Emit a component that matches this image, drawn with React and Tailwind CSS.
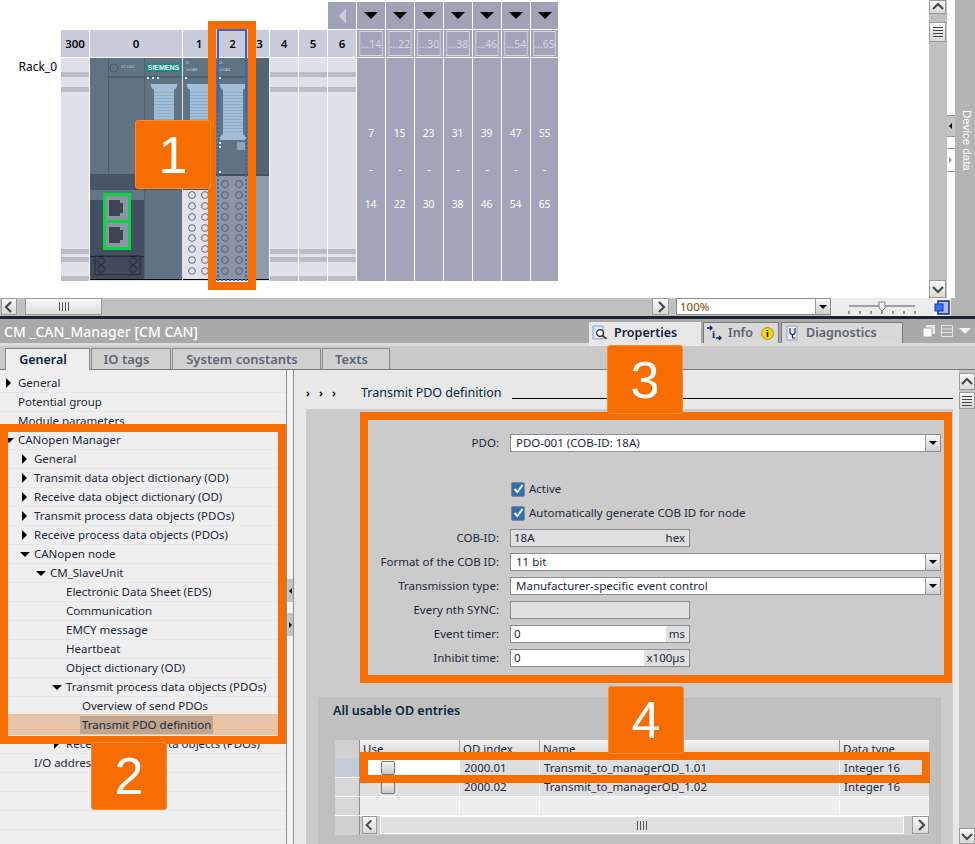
import React from "react";

const FONT = { fontFamily: '"Noto Sans", "Open Sans", sans-serif' };

function Stripes() {
  return (
    <div className="flex flex-col h-full bg-[#dfe0ea]">
      <div className="h-[14px] shrink-0" />
      <div className="h-[5px] shrink-0 bg-[#bcbcc9]" />
      <div className="h-[10px] shrink-0" />
      <div className="h-[5px] shrink-0 bg-[#bcbcc9]" />
      <div className="h-[157px] shrink-0" />
      <div className="h-[5px] shrink-0 bg-[#bcbcc9]" />
      <div className="h-[3px] shrink-0" />
      <div className="h-[5px] shrink-0 bg-[#bcbcc9]" />
      <div className="h-[14px] shrink-0" />
      <div className="h-[5px] shrink-0 bg-[#bcbcc9]" />
    </div>
  );
}

function Connector({ x }) {
  const lines = [];
  for (let y = 34; y < 76; y += 3) lines.push(<rect key={y} x={x + 3} y={y} width={20} height={1} fill="#8dadc9" />);
  return (
    <g>
      <path d={`M${x} 26h26v3l-3 3v44l3 3v3h-26v-3l3-3v-44l-3-3z`} fill="#a3bfd8" />
      {lines}
    </g>
  );
}

function Circles({ xs, ys, stroke }) {
  return ys.flatMap((y) =>
    xs.map((x) => <circle key={`${x}-${y}`} cx={x} cy={y} r="3.4" fill="none" stroke={stroke} strokeWidth="0.9" />)
  );
}

function Port({ y }) {
  return (
    <g>
      <rect x="16" y={y} width="22" height="24" fill="#8d94a4" />
      <path d={`M19 ${y + 4}h11v3h3v10h-3v3h-11z`} fill="#3f4452" />
    </g>
  );
}

function Modules() {
  const rowsA = [137, 148, 159, 170, 180, 191, 202, 213];
  const rowsB = [126, 137, 148, 159, 170, 180, 191, 202, 213];
  return (
    <svg width="179" height="223" viewBox="0 0 179 223" className="block">
      <rect width="179" height="223" fill="#dfe0ea" />
      <rect x="0" y="0" width="92" height="221" fill="#5f7383" />
      <rect x="18" y="0" width="1" height="116" fill="#4f6171" />
      <rect x="54" y="0" width="1" height="221" fill="#4f6171" />
      <rect x="18" y="18" width="74" height="2" fill="#4d5e6e" />
      <circle cx="24" cy="10" r="4" fill="none" stroke="#46586a" />
      <text x="31" y="10" fontSize="3.5" fill="#c9d3dc" fontFamily="Liberation Sans">S7-1200</text>
      <rect x="56" y="5" width="35" height="9" fill="#1a8a87" />
      <text x="73.5" y="12.2" textAnchor="middle" fontSize="7" fontWeight="700" fill="#f0f5f5" fontFamily="Liberation Sans">SIEMENS</text>
      <rect x="57" y="19" width="2" height="2" fill="#dbe3ea" />
      <rect x="62" y="19" width="2" height="2" fill="#dbe3ea" />
      <rect x="67" y="19" width="2" height="2" fill="#dbe3ea" />
      <Connector x={61} />
      <rect x="0" y="116" width="54" height="16" fill="#485565" />
      <rect x="54" y="116" width="38" height="16" fill="#485565" />
      <rect x="0" y="132" width="54" height="10" fill="#62768a" />
      <rect x="0" y="142" width="54" height="56" fill="#434e60" />
      <rect x="0" y="198" width="54" height="23" fill="#404a5b" />
      <rect x="0" y="198" width="54" height="1" fill="#262c38" />
      <rect x="5" y="198" width="45" height="18.5" fill="none" stroke="#262c38" />
      <Circles xs={[11, 43]} ys={[203, 211]} stroke="#23293a" />
      <rect x="13" y="135" width="28" height="57" fill="#0bd53c" />
      <Port y={138} />
      <Port y={165} />

      <rect x="93" y="0" width="32" height="116" fill="#5f7383" />
      <rect x="93" y="18" width="32" height="2" fill="#4d5e6e" />
      <rect x="93" y="116" width="32" height="16" fill="#485565" />
      <rect x="93" y="132" width="33" height="89" fill="#e0e1e9" />
      <rect x="95" y="19" width="2" height="2" fill="#dbe3ea" />
      <text x="96" y="6" fontSize="3.5" fill="#c9d3dc" fontFamily="Liberation Sans">DI</text>
      <text x="96" y="13" fontSize="3.5" fill="#c9d3dc" fontFamily="Liberation Sans">1xCAN</text>
      <Connector x={97} />
      <Circles xs={[102, 115]} ys={rowsA} stroke="#5b6375" />

      <rect x="126" y="0" width="33" height="116" fill="#5f7383" />
      <rect x="126" y="18" width="33" height="2" fill="#4d5e6e" />
      <rect x="126" y="116" width="33" height="2" fill="#464f5e" />
      <rect x="126" y="118" width="33" height="103" fill="#8a96a8" />
      <rect x="129" y="19" width="2" height="2" fill="#dbe3ea" />
      <text x="129" y="6" fontSize="3.5" fill="#c9d3dc" fontFamily="Liberation Sans">DI</text>
      <text x="129" y="13" fontSize="3.5" fill="#c9d3dc" fontFamily="Liberation Sans">1xCAN</text>
      <Connector x={130} />
      <rect x="147" y="84" width="8" height="8" fill="#8aa5bb" />
      <rect x="129" y="84" width="2" height="2" fill="#dbe3ea" />
      <rect x="129" y="88" width="2" height="2" fill="#dbe3ea" />
      <rect x="129" y="113" width="2" height="2" fill="#dbe3ea" />
      <Circles xs={[135, 149]} ys={rowsB} stroke="#4f586a" />

      <rect x="160" y="0" width="19" height="116" fill="#546474" />
      <rect x="160" y="116" width="19" height="2" fill="#464f5e" />
      <rect x="160" y="118" width="19" height="103" fill="#8f9bad" />
      <rect x="0" y="221" width="92" height="1" fill="#000" />
      <rect x="93" y="221" width="86" height="1" fill="#000" />
    </svg>
  );
}

function Arrow({ dir = "r", className = "" }) {
  const d = { r: "M5 2l5 5-5 5", l: "M9 2l-5 5 5 5", u: "M2 9l5-5 5 5", d: "M2 5l5 5 5-5" }[dir];
  return (
    <svg width="14" height="14" viewBox="0 0 14 14" className={className}>
      <path d={d} fill="none" stroke="#4a4a4a" strokeWidth="2.2" />
    </svg>
  );
}

function ScrollBtn({ dir, className = "" }) {
  return (
    <div className={`flex items-center justify-center border border-[#9a9a9a] bg-gradient-to-b from-[#fafafa] to-[#d8d8d8] ${className}`}>
      <Arrow dir={dir} />
    </div>
  );
}

function Grip({ vertical }) {
  return vertical ? (
    <div className="flex flex-col gap-[2px] w-[10px]">
      <div className="h-px bg-[#444]" />
      <div className="h-px bg-[#444]" />
      <div className="h-px bg-[#444]" />
      <div className="h-px bg-[#444]" />
    </div>
  ) : (
    <div className="flex gap-[2px] h-[9px]">
      <div className="w-px bg-[#555]" />
      <div className="w-px bg-[#555]" />
      <div className="w-px bg-[#555]" />
      <div className="w-px bg-[#555]" />
    </div>
  );
}

function Tri({ dir }) {
  if (dir === "r") return <div className="w-0 h-0 border-y-[5px] border-y-transparent border-l-[5px] border-l-black" />;
  return <div className="-ml-[2px] w-0 h-0 border-x-[5px] border-x-transparent border-t-[5px] border-t-black" />;
}

function RowTree({ level, label, arrow, highlight }) {
  const pad = 18 + level * 16;
  return (
    <div
      className={`relative h-[19px] shrink-0 flex items-center border-b text-[11.5px] text-[#1b2a3a] ${
        highlight ? "bg-[#e8c3a5] border-[#e8c3a5] shadow-[0_-2px_0_#e8c3a5]" : "border-[#e8e8e8]"
      }`}
      style={{ paddingLeft: pad }}
    >
      {arrow && (
        <span className="w-[12px] -ml-[12px] flex justify-start">
          <Tri dir={arrow} />
        </span>
      )}
      <span className={highlight ? "bg-[#bfa58f] px-[2px] -ml-[2px] h-[18px] leading-[18px]" : ""}>{label}</span>
    </div>
  );
}

const TREE = [
  [0, "General", "r"],
  [0, "Potential group"],
  [0, "Module parameters"],
  [0, "CANopen Manager", "d"],
  [1, "General", "r"],
  [1, "Transmit data object dictionary (OD)", "r"],
  [1, "Receive data object dictionary (OD)", "r"],
  [1, "Transmit process data objects (PDOs)", "r"],
  [1, "Receive process data objects (PDOs)", "r"],
  [1, "CANopen node", "d"],
  [2, "CM_SlaveUnit", "d"],
  [3, "Electronic Data Sheet (EDS)"],
  [3, "Communication"],
  [3, "EMCY message"],
  [3, "Heartbeat"],
  [3, "Object dictionary (OD)"],
  [3, "Transmit process data objects (PDOs)", "d"],
  [4, "Overview of send PDOs"],
  [4, "Transmit PDO definition", null, true],
  [3, "Receive process data objects (PDOs)", "r"],
  [1, "I/O addresses"],
  [0, ""],
  [0, ""],
  [0, ""],
  [0, ""],
];

function Label({ children }) {
  return <div className="w-[139px] text-right text-[11.5px] text-[#1b2a3a] shrink-0">{children}</div>;
}

function Box({ className = "", children }) {
  return <div className={`h-[18px] border border-[#8e8e8e] flex items-center text-[11.5px] text-[#1b2a3a] ${className}`}>{children}</div>;
}

function Select({ label, value }) {
  return (
    <div className="h-[18px] flex items-center">
      <Label>{label}</Label>
      <Box className="ml-[11px] w-[431px] bg-white pl-[5px] justify-between">
        <span>{value}</span>
        <div className="w-[15px] h-full border-l border-[#9a9a9a] bg-gradient-to-b from-[#f8f8f8] to-[#cfcfcf] flex items-center justify-center">
          <div className="w-0 h-0 border-x-[4px] border-x-transparent border-t-[4px] border-t-black" />
        </div>
      </Box>
    </div>
  );
}

function Unit({ label, value, unit, disabled, valueW }) {
  return (
    <div className="h-[18px] flex items-center">
      <Label>{label}</Label>
      <Box className="ml-[11px] w-[180px] bg-[#e0e0e0]">
        <div className={`h-full flex items-center pl-[3px] ${disabled ? "" : "bg-white"}`} style={{ width: valueW }}>
          {value}
        </div>
        <span className="ml-auto pr-[4px]">{unit}</span>
      </Box>
    </div>
  );
}

function Check({ label }) {
  return (
    <div className="h-[18px] flex items-center pl-[151px] text-[11.5px] text-[#1b2a3a]">
      <div className="w-[14px] h-[15px] rounded-[2px] border border-[#7d8b99] bg-[#2f6fb3] flex items-center justify-center">
        <svg width="11" height="10" viewBox="0 0 11 10">
          <path d="M1.5 5l3 3 5-7" fill="none" stroke="#fff" strokeWidth="2" />
        </svg>
      </div>
      <span className="ml-[4px]">{label}</span>
    </div>
  );
}

function TableRow({ index, name, selected }) {
  return (
    <div className="grid grid-cols-[25px_100px_80px_300px_89px] h-[19px] text-[11.5px] text-[#1b2a3a] border-b border-white">
      <div className={selected ? "bg-[#c3cdd9] border-r border-[#8e8e8e]" : "bg-[#d8d8d8] border-r border-[#8e8e8e]"} />
      <div className={`flex justify-center items-center pr-[44px] border-r border-white ${selected ? "bg-white" : "bg-[#dfdfdf]"}`}>
        <div className="w-[14px] h-[14px] rounded-[2px] border border-[#777] bg-gradient-to-b from-[#f4f4f4] to-[#c8c8c8]" />
      </div>
      <div className="bg-[#dfdfdf] border-r border-white flex items-center pl-[4px]">{index}</div>
      <div className="bg-[#dfdfdf] border-r border-white flex items-center pl-[4px]">{name}</div>
      <div className="bg-[#dfdfdf] flex items-center pl-[4px]">Integer 16</div>
    </div>
  );
}

function Marker({ n, className }) {
  return (
    <div
      className={`absolute flex items-center justify-center bg-[#f76d00] border border-[#f98a33] rounded-[3px] text-white text-[52px] leading-none ${className}`}
      style={{ fontFamily: '"Liberation Sans", sans-serif' }}
    >
      {n}
    </div>
  );
}

const COLS = [
  ["...14", "7", "14"],
  ["...22", "15", "22"],
  ["...30", "23", "30"],
  ["...38", "31", "38"],
  ["...46", "39", "46"],
  ["...54", "47", "54"],
  ["...65", "55", "65"],
];

function HeadCell({ w, children }) {
  return (
    <div className="h-[27px] bg-[#c9ccda] flex items-center justify-center text-[11.5px] font-semibold text-black shrink-0" style={{ width: w }}>
      {children}
    </div>
  );
}

export default function App() {
  return (
    <div className="relative w-[975px] h-[844px] overflow-hidden bg-white" style={FONT}>
      {/* Device view */}
      <div className="h-[316px] flex flex-col">
        <div className="flex h-[298px]">
          <div className="w-[933px] relative pt-[2px] pl-[61px]">
            <div className="flex gap-px ml-[267px] h-[27px]">
              <div className="w-[28px] bg-[#a0a3b7] flex items-center justify-center">
                <div className="w-0 h-0 border-y-[8px] border-y-transparent border-r-[7px] border-r-[#c8cad6]" />
              </div>
              {COLS.map((c, i) => (
                <div key={c[0]} className={`${i === 6 ? "w-[27px]" : "w-[28px]"} bg-[#a0a3b7] flex items-center justify-center`}>
                  <div className="w-0 h-0 border-x-[7px] border-x-transparent border-t-[7px] border-t-black" />
                </div>
              ))}
            </div>
            <div className="flex gap-px mt-px">
              <HeadCell w={28}>300</HeadCell>
              <HeadCell w={92}>0</HeadCell>
              <HeadCell w={32}>1</HeadCell>
              <HeadCell w={33}>2</HeadCell>
              <HeadCell w={19}>3</HeadCell>
              <HeadCell w={28}>4</HeadCell>
              <HeadCell w={28}>5</HeadCell>
              <HeadCell w={28}>6</HeadCell>
              {COLS.map((c, i) => (
                <div key={c[0]} className={`${i === 6 ? "w-[27px]" : "w-[28px]"} h-[27px] bg-[#a2a5b9] p-px`}>
                  <div className="w-full h-full border border-[#d6d8e2] flex items-center justify-center text-[11.5px] text-[#d6d8e2] scale-x-90">
                    {c[0]}
                  </div>
                </div>
              ))}
            </div>
            <div className="flex gap-px mt-px h-[223px]">
              <div className="w-[28px] relative">
                <Stripes />
                <div className="absolute right-[32px] top-0 text-[12px] text-black">Rack_0</div>
              </div>
              <Modules />
              <div className="w-[28px]"><Stripes /></div>
              <div className="w-[28px]"><Stripes /></div>
              <div className="w-[28px]"><Stripes /></div>
              {COLS.map((c, i) => (
                <div key={c[0]} className={`${i === 6 ? "w-[27px]" : "w-[28px]"} bg-[#a2a5b9] flex flex-col items-center text-white text-[11.5px] pt-[65px] gap-[16.5px]`}>
                  <div className="h-[19px] leading-[19px] scale-x-90">{c[1]}</div>
                  <div className="h-[19px] leading-[19px]">-</div>
                  <div className="h-[19px] leading-[19px] scale-x-90">{c[2]}</div>
                </div>
              ))}
            </div>
          </div>
          <div className="w-[18px] bg-[#c0c0c0] flex flex-col items-center">
            <ScrollBtn dir="u" className="w-[17px] h-[14px]" />
            <div className="mt-[8px] w-[17px] h-[20px] border border-[#9a9a9a] bg-gradient-to-b from-[#fafafa] to-[#d8d8d8] flex items-center justify-center">
              <Grip vertical />
            </div>
            <div className="flex-1" />
            <ScrollBtn dir="d" className="w-[17px] h-[18px]" />
          </div>
          <div className="w-[8px] flex flex-col pt-[115px]">
            <div className="h-[22px] border-y border-[#9a9a9a] bg-[#c4c4c4] flex items-center justify-center">
              <div className="w-0 h-0 border-y-[3px] border-y-transparent border-r-[3px] border-r-black" />
            </div>
            <div className="h-[11px]" />
            <div className="h-[24px] border-y border-[#9a9a9a] flex items-center justify-center">
              <div className="w-0 h-0 border-y-[3px] border-y-transparent border-l-[3px] border-l-[#999]" />
            </div>
          </div>
          <div className="flex-1 bg-[#b4b4b4] flex justify-center pt-[110px] pl-[3px]">
            <span className="text-white text-[11.5px] h-[62px] [writing-mode:vertical-rl]" style={{ fontFamily: '"Liberation Sans", sans-serif' }}>Device data</span>
          </div>
        </div>
        <div className="flex h-[18px] bg-[#c0c0c0]">
          <ScrollBtn dir="l" className="w-[16px] h-[17px] ml-px" />
          <div className="ml-[8px] w-[77px] h-[17px] border border-[#9a9a9a] bg-gradient-to-b from-[#f8f8f8] to-[#dcdcdc] flex items-center justify-center">
            <Grip />
          </div>
          <div className="w-[550px]" />
          <ScrollBtn dir="r" className="w-[17px] h-[17px]" />
          <div className="ml-[7px] w-[155px] h-[17px] border border-[#8e8e8e] bg-white flex items-center pl-[3px] text-[11.5px] text-[#7a4a00] justify-between">
            <span>100%</span>
            <div className="w-[15px] h-full border-l border-[#9a9a9a] bg-gradient-to-b from-[#f8f8f8] to-[#cfcfcf] flex items-center justify-center">
              <div className="w-0 h-0 border-x-[4px] border-x-transparent border-t-[4px] border-t-black" />
            </div>
          </div>
          <div className="w-[102px] bg-[#ececec] flex items-center justify-center">
            <svg width="68" height="16" viewBox="0 0 68 16">
              <path d="M1 7h66" stroke="#555" />
              <path d="M1 12v3M12 12v3M23 12v3M34 12v3M45 12v3M56 12v3M67 12v3" stroke="#333" />
              <path d="M31 3h6v6l-3 3-3-3z" fill="#eee" stroke="#888" />
            </svg>
          </div>
          <div className="w-[18px] bg-[#f4f4f4] flex items-center justify-center">
            <svg width="16" height="15" viewBox="0 0 16 15">
              <rect x="4" y="1" width="11" height="13" fill="#a8bce8" stroke="#10206c" strokeWidth="1.4" />
              <rect x="1" y="4" width="8" height="7" fill="#3a6df0" stroke="#1a3ab0" />
            </svg>
          </div>
          <div className="flex-1 bg-[#b4b4b4]" />
        </div>
      </div>
      <div className="h-[3px] bg-[#1c2433]" />

      {/* Title bar */}
      <div className="relative z-10 h-[24px] bg-[#a9a9a9] flex items-center pr-[4px]">
        <span className="pl-[4px] text-white text-[14px] font-medium w-[589px]">CM _CAN_Manager [CM CAN]</span>
        <div className="flex items-start h-[24px] gap-[2px] pt-[3px] self-start">
          <div className="w-[112px] h-[24px] shrink-0 bg-[#e8e8e8] flex items-center pl-[3px] pb-[2px] text-[12.5px] font-semibold text-[#10243c]">
            <svg width="16" height="16" viewBox="0 0 16 16">
              <path d="M1 1h10v13H1z" fill="#dfe6f6" stroke="#8d9ecf" />
              <circle cx="8" cy="8" r="3.4" fill="#fff" stroke="#222" strokeWidth="1.2" />
              <path d="M10.5 10.5l4 3.5" stroke="#222" strokeWidth="1.6" />
            </svg>
            <span className="ml-[6px]">Properties</span>
          </div>
          <div className="w-[76px] h-[21px] shrink-0 bg-[#d8d8d8] border border-b-0 border-[#777] flex items-center pl-[2px] text-[12.5px] font-semibold text-[#5a6372]">
            <svg width="16" height="16" viewBox="0 0 16 16">
              <path d="M1 3h5M4 1l2 2-2 2M10 13h5M13 11l2 2-2 2" fill="none" stroke="#10206c" strokeWidth="1.3" />
              <text x="6" y="13" fontSize="11" fontWeight="700" fill="#10206c" fontFamily="Liberation Serif">i</text>
            </svg>
            <span className="ml-[6px]">Info</span>
            <div className="ml-[8px] w-[13px] h-[13px] rounded-full bg-[#f2d21c] border border-[#b59b00] flex items-center justify-center text-[9px] font-bold text-black leading-none">i</div>
          </div>
          <div className="w-[122px] h-[21px] shrink-0 bg-[#d8d8d8] border border-b-0 border-[#777] flex items-center pl-[3px] text-[12.5px] font-semibold text-[#5a6372]">
            <svg width="16" height="16" viewBox="0 0 16 16">
              <path d="M2 1h10v14H2z" fill="#eef1fb" stroke="#8d9ecf" />
              <path d="M5 3v4a2.5 2.5 0 0 0 5 0V3M7.5 9.5V13h3" fill="none" stroke="#1a2a6a" strokeWidth="1.2" />
            </svg>
            <span className="ml-[5px]">Diagnostics</span>
          </div>
        </div>
        <div className="ml-auto flex items-center gap-[6px]">
          <svg width="12" height="12" viewBox="0 0 12 12">
            <rect x="3" y="0" width="9" height="9" fill="#e8e8e8" />
            <rect x="0" y="3" width="9" height="9" fill="#fff" stroke="#a9a9a9" />
          </svg>
          <svg width="12" height="12" viewBox="0 0 12 12">
            <path d="M.5.5h11v11H.5zM.5 4h11M.5 7.5h11" fill="none" stroke="#e4e4e4" />
          </svg>
          <div className="w-0 h-0 border-x-[6px] border-x-transparent border-t-[6px] border-t-[#f2f2f2]" />
        </div>
      </div>

      {/* Sub tabs */}
      <div className="h-[27px] bg-[#c9c9c9] border-b border-[#7a7a7a] border-t-[3px] border-t-[#dcdcdc] flex items-end pl-[5px] gap-px text-[12.5px] font-semibold">
        <div className="w-[85px] h-[22px] -mb-px bg-[#efefef] border border-b-0 border-[#8a8a8a] flex items-center justify-center pr-[9px] pt-[2px] text-[#10243c]">General</div>
        <div className="w-[80px] h-[21px] bg-[#d0d0d0] border border-b-0 border-[#8a8a8a] flex items-center justify-center pr-[9px] pt-[2px] text-[13px] text-[#5f6670]">IO tags</div>
        <div className="w-[149px] h-[21px] bg-[#d0d0d0] border border-b-0 border-[#8a8a8a] flex items-center justify-center pr-[9px] pt-[2px] text-[13px] text-[#5f6670]">System constants</div>
        <div className="w-[68px] h-[21px] bg-[#d0d0d0] border border-b-0 border-[#8a8a8a] flex items-center justify-center pr-[9px] pt-[2px] text-[13px] text-[#5f6670]">Texts</div>
      </div>

      {/* Lower panel */}
      <div className="flex h-[474px]">
        <div className="w-[286px] bg-[#efefef] pt-[4px] flex flex-col overflow-hidden">
          {TREE.map((r, i) => (
            <RowTree key={i} level={r[0]} label={r[1]} arrow={r[2]} highlight={r[3]} />
          ))}
        </div>
        <div className="w-[8px] bg-[#f4f4f4] border-x border-[#8e8e8e] flex flex-col pt-[209px]">
          <div className="h-[23px] bg-[#c4c4c4] flex items-center justify-center">
            <div className="w-0 h-0 border-y-[3px] border-y-transparent border-r-[3px] border-r-black" />
          </div>
          <div className="h-[11px]" />
          <div className="h-[23px] bg-[#c4c4c4] flex items-center justify-center">
            <div className="w-0 h-0 border-y-[3px] border-y-transparent border-l-[3px] border-l-black" />
          </div>
        </div>
        <div className="flex-1 bg-[#e8e8e8] flex">
          <div className="w-[659px] pl-[12px] flex flex-col">
            <div className="h-[39px] flex items-center pt-[8px] text-[12.5px] text-[#10243c]">
              <div className="flex gap-[9px] text-[11px] font-bold text-black w-[55px]">
                <span>›</span><span>›</span><span>›</span>
              </div>
              <span>Transmit PDO definition</span>
              <div className="flex-1 h-px bg-black ml-[10px] mt-[9px]" />
            </div>
            <div className="flex-1 bg-[#cbcbcb] flex flex-col">
              <div className="pl-[54px] pt-[25px] flex flex-col">
                <Select label="PDO:" value="PDO-001 (COB-ID: 18A)" />
                <div className="mt-[28px]"><Check label="Active" /></div>
                <div className="mt-[6px]"><Check label="Automatically generate COB ID for node" /></div>
                <div className="mt-[7px]"><Unit label="COB-ID:" value="18A" unit="hex" disabled valueW={60} /></div>
                <div className="mt-[6px]"><Select label="Format of the COB ID:" value="11 bit" /></div>
                <div className="mt-[6px]"><Select label="Transmission type:" value="Manufacturer-specific event control" /></div>
                <div className="mt-[6px]"><Unit label="Every nth SYNC:" value="" unit="" disabled valueW={60} /></div>
                <div className="mt-[6px]"><Unit label="Event timer:" value="0" unit="ms" valueW={155} /></div>
                <div className="mt-[6px]"><Unit label="Inhibit time:" value="0" unit="x100µs" valueW={133} /></div>
              </div>
              <div className="ml-[12px] mr-[12px] mt-[30px] flex-1 bg-[#c0c0c0] flex flex-col">
                <div className="h-[43px] pt-[5px] pl-[15px] text-[12.5px] font-semibold text-[#10243c]">All usable OD entries</div>
                <div className="ml-[17px] w-[594px]">
                  <div className="grid grid-cols-[25px_100px_80px_300px_89px] h-[19px] text-[11.5px] text-[#1b2a3a]">
                    <div className="bg-[#d0d0d0] border-r border-[#8e8e8e]" />
                    <div className="bg-gradient-to-b from-[#f2f2f2] to-[#d4d4d4] border-r border-[#9a9a9a] pl-[3px]">Use</div>
                    <div className="bg-gradient-to-b from-[#f2f2f2] to-[#d4d4d4] border-r border-[#9a9a9a] pl-[3px]">OD index</div>
                    <div className="bg-gradient-to-b from-[#f2f2f2] to-[#d4d4d4] border-r border-[#9a9a9a] pl-[3px]">Name</div>
                    <div className="bg-gradient-to-b from-[#f2f2f2] to-[#d4d4d4] pl-[3px]">Data type</div>
                  </div>
                  <TableRow index="2000.01" name="Transmit_to_managerOD_1.01" selected />
                  <TableRow index="2000.02" name="Transmit_to_managerOD_1.02" />
                  <div className="grid grid-cols-[25px_100px_80px_300px_89px] h-[19px] border-b border-white">
                    <div className="bg-[#d8d8d8] border-r border-[#8e8e8e]" />
                    <div className="bg-[#eeeeee] border-r border-white" />
                    <div className="bg-[#eeeeee] border-r border-white" />
                    <div className="bg-[#eeeeee] border-r border-white" />
                    <div className="bg-[#eeeeee]" />
                  </div>
                  <div className="flex h-[19px] bg-[#d0d0d0]">
                    <div className="w-[25px] border-r border-[#8e8e8e]" />
                    <ScrollBtn dir="l" className="ml-[2px] w-[15px] h-[18px]" />
                    <div className="ml-[3px] w-[524px] h-[18px] border border-white bg-[#e0e0e0] flex items-center justify-center">
                      <Grip />
                    </div>
                    <div className="flex-1" />
                    <ScrollBtn dir="r" className="w-[17px] h-[18px]" />
                  </div>
                </div>
              </div>
            </div>
          </div>
          <div className="flex-1 flex justify-end">
            <div className="w-[16px] bg-[#c4c4c4] flex flex-col pt-[3px]">
              <ScrollBtn dir="u" className="w-[16px] h-[17px]" />
              <div className="mt-[2px] h-[17px] border border-[#9a9a9a] bg-gradient-to-b from-[#fafafa] to-[#d8d8d8] flex items-center justify-center">
                <Grip vertical />
              </div>
              <div className="flex-1" />
              <ScrollBtn dir="d" className="w-[16px] h-[16px]" />
            </div>
          </div>
        </div>
      </div>

      {/* Annotation overlays */}
      <div className="absolute left-[208px] top-[21px] w-[48px] h-[269px] border-[8px] border-[#f76d00]">
        <div className="h-[82px] mx-px border-x-2 border-t-2 border-[#3a62c8]" />
        <div className="h-[170px] mx-px border-x-2 border-b-2 border-dotted border-[#3a62c8]" />
      </div>
      <Marker n="1" className="left-[135px] top-[120px] w-[76px] h-[69px]" />
      <div className="absolute left-0 top-[424px] w-[286px] h-[320px] border-[8px] border-[#f76d00]" />
      <Marker n="2" className="left-[91px] top-[742px] w-[76px] h-[68px]" />
      <div className="absolute left-[360px] top-[412px] w-[592px] h-[271px] border-[8px] border-[#f76d00]" />
      <Marker n="3" className="left-[607px] top-[345px] w-[76px] h-[69px] z-20" />
      <div className="absolute left-[360px] top-[752px] w-[570px] h-[31px] border-[8px] border-[#f76d00]" />
      <Marker n="4" className="left-[608px] top-[686px] w-[76px] h-[68px]" />
    </div>
  );
}
